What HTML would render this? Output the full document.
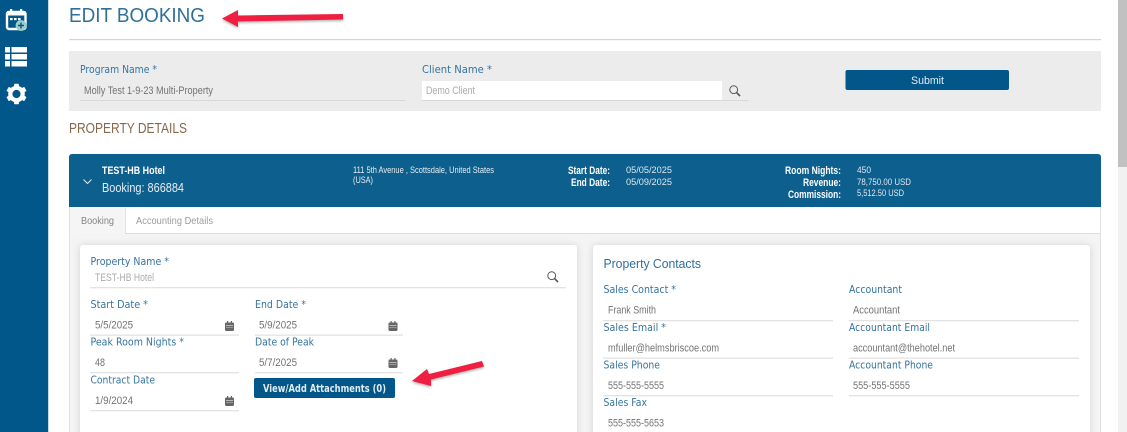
<!DOCTYPE html>
<html lang="en"><head><meta charset="utf-8"><title>Edit Booking</title>
<style>
html,body{margin:0;padding:0;width:1127px;height:432px;overflow:hidden;background:#fff}
svg{display:block;filter:blur(.35px)}
text{font-family:"Liberation Sans",sans-serif;white-space:pre}
.lb{font-family:"DejaVu Sans",sans-serif;font-size:10.8px;fill:#35749f}
.v{font-size:11px;fill:#737373}
.ph{font-size:11px;fill:#ababab}
.w{font-size:9.5px;fill:#dfe8ef}
.wb{font-size:11px;font-weight:bold;fill:#fff}
.u{fill:#e3e3e3}
</style></head><body>
<svg width="1127" height="432" viewBox="0 0 1127 432" xmlns="http://www.w3.org/2000/svg">
<defs>
<filter id="sh" x="-20%" y="-20%" width="140%" height="140%"><feGaussianBlur stdDeviation="4"/></filter>
<filter id="ash" x="-20%" y="-50%" width="140%" height="220%"><feGaussianBlur stdDeviation="1.2"/></filter>
<g id="cal"><rect x="0" y="1.5" width="9" height="8.5" rx="1.2" fill="#666"/><rect x="2" y="0" width="1.2" height="2.5" fill="#666"/><rect x="5.8" y="0" width="1.2" height="2.5" fill="#666"/><rect x="1" y="4.2" width="7" height=".7" fill="#ddd"/><rect x="1" y="6.4" width="7" height=".6" fill="#bbb"/></g>
<g id="srch" fill="none" stroke="#555"><circle cx="4.7" cy="4.7" r="3.9" stroke-width="1"/><path d="M7.6 7.6L11 11" stroke-width="1.6"/></g>
</defs>

<rect width="1127" height="432" fill="#fff"/>

<!-- sidebar -->
<rect x="0" y="0" width="48" height="432" fill="#01568a"/>
<rect x="48" y="0" width="1" height="432" fill="#c9d9e4"/>
<!-- calendar icon -->
<rect x="7" y="12" width="18.500" height="17" rx="2" fill="none" stroke="#fff" stroke-width="2.400"/>
<rect x="7" y="11" width="18.500" height="4.500" fill="#fff"/>
<rect x="10" y="9" width="2.200" height="4" fill="#fff"/><rect x="20" y="9" width="2.200" height="4" fill="#fff"/>
<rect x="10" y="18" width="2.600" height="2.200" fill="#fff"/><rect x="14" y="18" width="2.600" height="2.200" fill="#fff"/><rect x="18" y="18" width="2.600" height="2.200" fill="#fff"/>
<circle cx="21" cy="25.500" r="5.400" fill="#9ccfc6"/>
<path d="M21 22.500v6M18 25.500h6" stroke="#01568a" stroke-width="1.400"/>
<!-- list icon -->
<g fill="#fff"><rect x="5" y="47" width="5" height="5.500"/><rect x="11.500" y="47" width="15.500" height="5.500"/><rect x="5" y="54" width="5" height="5.500"/><rect x="11.500" y="54" width="15.500" height="5.500"/><rect x="5" y="61" width="5" height="5.500"/><rect x="11.500" y="61" width="15.500" height="5.500"/></g>
<!-- gear icon -->
<g transform="translate(16.500 94)" fill="#fff">
<circle r="6.200" fill="none" stroke="#fff" stroke-width="4.200"/>
<rect x="-2.400" y="-10.300" width="4.800" height="5" rx=".7"/>
<rect x="-2.400" y="-10.300" width="4.800" height="5" rx=".7" transform="rotate(60)"/>
<rect x="-2.400" y="-10.300" width="4.800" height="5" rx=".7" transform="rotate(120)"/>
<rect x="-2.400" y="-10.300" width="4.800" height="5" rx=".7" transform="rotate(180)"/>
<rect x="-2.400" y="-10.300" width="4.800" height="5" rx=".7" transform="rotate(240)"/>
<rect x="-2.400" y="-10.300" width="4.800" height="5" rx=".7" transform="rotate(300)"/>
</g>

<!-- scrollbar -->
<rect x="1118" y="0" width="9" height="432" fill="#f1f1f1"/>
<rect x="1118" y="0" width="9" height="167" fill="#c1c1c1"/>

<!-- title -->
<text x="69" y="22" font-size="20" fill="#2f7099" textLength="136" lengthAdjust="spacingAndGlyphs">EDIT BOOKING</text>
<rect x="69" y="39" width="1032" height="1.200" fill="#c5d8e5"/>

<!-- top panel -->
<rect x="69" y="51" width="1032" height="60" fill="#ececec"/>
<text class="lb" x="80" y="73" textLength="77" lengthAdjust="spacingAndGlyphs">Program Name *</text>
<text class="v" x="84" y="94" textLength="129" lengthAdjust="spacingAndGlyphs">Molly Test 1-9-23 Multi-Property</text>
<rect x="80" y="100" width="326" height="1" fill="#d8d8d8"/>
<text class="lb" x="422" y="73" textLength="70" lengthAdjust="spacingAndGlyphs">Client Name *</text>
<rect x="422" y="81" width="300" height="19" fill="#fff"/>
<text class="ph" x="426" y="94" textLength="49" lengthAdjust="spacingAndGlyphs">Demo Client</text>
<rect x="422" y="100" width="326" height="1" fill="#d8d8d8"/>
<use href="#srch" x="729" y="85"/>
<rect x="845.500" y="70" width="163.500" height="20" rx="2" fill="#01568a"/>
<text x="911" y="84" font-size="11" fill="#e4ecf1" textLength="33" lengthAdjust="spacingAndGlyphs">Submit</text>

<text x="69" y="133" font-size="14.500" fill="#84694a" textLength="118" lengthAdjust="spacingAndGlyphs">PROPERTY DETAILS</text>

<!-- accordion -->
<rect x="69" y="154" width="1032" height="278" fill="#f4f4f4"/>
<rect x="69" y="207" width="1032" height="26" fill="#fff"/>
<rect x="69" y="233" width="1032" height="1" fill="#dedede"/>
<rect x="69" y="207" width="1" height="225" fill="#e0e0e0"/>
<rect x="1100" y="207" width="1" height="225" fill="#e0e0e0"/>
<path d="M69 157a3 3 0 0 1 3-3h1026a3 3 0 0 1 3 3v50H69z" fill="#0d5f8e"/>
<path d="M83.500 179.500l4 4 4-4" fill="none" stroke="#dfe9f0" stroke-width="1"/>
<text class="wb" x="102" y="174" textLength="63" lengthAdjust="spacingAndGlyphs">TEST-HB Hotel</text>
<text x="102" y="192" font-size="13" fill="#e6edf2" textLength="82" lengthAdjust="spacingAndGlyphs">Booking: 866884</text>
<text x="353" y="173" font-size="9" fill="#e6edf2" textLength="141" lengthAdjust="spacingAndGlyphs">111 5th Avenue , Scottsdale, United States</text>
<text x="353" y="183" font-size="9" fill="#e6edf2" textLength="20" lengthAdjust="spacingAndGlyphs">(USA)</text>
<text class="wb" x="568" y="174" textLength="42" lengthAdjust="spacingAndGlyphs">Start Date:</text>
<text class="wb" x="571" y="186" textLength="39" lengthAdjust="spacingAndGlyphs">End Date:</text>
<text class="w" x="626" y="173" textLength="46" lengthAdjust="spacingAndGlyphs">05/05/2025</text>
<text class="w" x="626" y="185" textLength="46" lengthAdjust="spacingAndGlyphs">05/09/2025</text>
<text class="wb" x="785" y="174" textLength="56" lengthAdjust="spacingAndGlyphs">Room Nights:</text>
<text class="wb" x="803" y="186" textLength="38" lengthAdjust="spacingAndGlyphs">Revenue:</text>
<text class="wb" x="788" y="198" textLength="53" lengthAdjust="spacingAndGlyphs">Commission:</text>
<text class="w" x="857" y="173" textLength="14" lengthAdjust="spacingAndGlyphs">450</text>
<text class="w" x="857" y="185" textLength="54" lengthAdjust="spacingAndGlyphs">78,750.00 USD</text>
<text class="w" x="857" y="196" textLength="47" lengthAdjust="spacingAndGlyphs">5,512.50 USD</text>

<!-- tabs -->
<rect x="70" y="208" width="55" height="26" fill="#f5f5f5"/>
<rect x="125" y="208" width="1" height="26" fill="#e2e2e2"/>
<text x="81" y="224" font-size="10.500" fill="#858585" textLength="33" lengthAdjust="spacingAndGlyphs">Booking</text>
<text x="136" y="224" font-size="10.500" fill="#9c9c9c" textLength="77" lengthAdjust="spacingAndGlyphs">Accounting Details</text>

<!-- cards -->
<rect x="80" y="245" width="497" height="200" rx="3" fill="#000" opacity=".13" filter="url(#sh)"/>
<rect x="593" y="245" width="497" height="200" rx="3" fill="#000" opacity=".13" filter="url(#sh)"/>
<rect x="80" y="245" width="497" height="200" rx="3" fill="#fff"/>
<rect x="593" y="245" width="497" height="200" rx="3" fill="#fff"/>

<!-- left card -->
<text class="lb" x="90.500" y="265" textLength="78.500" lengthAdjust="spacingAndGlyphs">Property Name *</text>
<text class="ph" x="95" y="281" textLength="59" lengthAdjust="spacingAndGlyphs">TEST-HB Hotel</text>
<use href="#srch" x="547" y="271"/>
<rect class="u" x="90" y="287" width="476" height="1.300"/>

<text class="lb" x="90.500" y="308" textLength="57.500" lengthAdjust="spacingAndGlyphs">Start Date *</text>
<text class="v" x="95" y="328.500" textLength="38" lengthAdjust="spacingAndGlyphs">5/5/2025</text>
<use href="#cal" x="225" y="321"/>
<rect class="u" x="90" y="334.500" width="149" height="1.300"/>
<text class="lb" x="255" y="308" textLength="51" lengthAdjust="spacingAndGlyphs">End Date *</text>
<text class="v" x="259" y="328.500" textLength="38" lengthAdjust="spacingAndGlyphs">5/9/2025</text>
<use href="#cal" x="388.500" y="321"/>
<rect class="u" x="255" y="334.500" width="148" height="1.300"/>

<text class="lb" x="90.500" y="345.500" textLength="93.500" lengthAdjust="spacingAndGlyphs">Peak Room Nights *</text>
<text class="v" x="95" y="366" textLength="10" lengthAdjust="spacingAndGlyphs">48</text>
<rect class="u" x="90" y="372" width="149" height="1.300"/>
<text class="lb" x="255" y="345.500" textLength="59" lengthAdjust="spacingAndGlyphs">Date of Peak</text>
<text class="v" x="259" y="366" textLength="38" lengthAdjust="spacingAndGlyphs">5/7/2025</text>
<use href="#cal" x="388.500" y="358"/>
<rect class="u" x="255" y="372" width="148" height="1.300"/>

<text class="lb" x="90.500" y="383.500" textLength="64.500" lengthAdjust="spacingAndGlyphs">Contract Date</text>
<text class="v" x="95" y="404" textLength="38" lengthAdjust="spacingAndGlyphs">1/9/2024</text>
<use href="#cal" x="225" y="396"/>
<rect class="u" x="90" y="410" width="149" height="1.300"/>

<rect x="254" y="378" width="141" height="20" rx="2" fill="#01568a"/>
<text x="263" y="392" font-size="10.800" font-weight="bold" fill="#e4ecf1" style="font-family:'DejaVu Sans',sans-serif" textLength="123" lengthAdjust="spacingAndGlyphs">View/Add Attachments (0)</text>

<!-- right card -->
<text x="603.500" y="268" font-size="13" fill="#2f6f9b" textLength="97.500" lengthAdjust="spacingAndGlyphs">Property Contacts</text>
<text class="lb" x="603.500" y="293" textLength="72.500" lengthAdjust="spacingAndGlyphs">Sales Contact *</text>
<text class="v" x="608" y="313.500" textLength="48" lengthAdjust="spacingAndGlyphs">Frank Smith</text>
<rect class="u" x="603" y="320" width="230" height="1.300"/>
<text class="lb" x="603.500" y="331" textLength="62.500" lengthAdjust="spacingAndGlyphs">Sales Email *</text>
<text class="v" x="608" y="351.500" textLength="111" lengthAdjust="spacingAndGlyphs">mfuller@helmsbriscoe.com</text>
<rect class="u" x="603" y="357.500" width="230" height="1.300"/>
<text class="lb" x="603.500" y="368.500" textLength="56.500" lengthAdjust="spacingAndGlyphs">Sales Phone</text>
<text class="v" x="608" y="389" textLength="56" lengthAdjust="spacingAndGlyphs">555-555-5555</text>
<rect class="u" x="603" y="395" width="230" height="1.300"/>
<text class="lb" x="603.500" y="406" textLength="43.500" lengthAdjust="spacingAndGlyphs">Sales Fax</text>
<text class="v" x="608" y="426.500" textLength="56" lengthAdjust="spacingAndGlyphs">555-555-5653</text>

<text class="lb" x="849" y="293" textLength="53" lengthAdjust="spacingAndGlyphs">Accountant</text>
<text class="v" x="853" y="313.500" textLength="47" lengthAdjust="spacingAndGlyphs">Accountant</text>
<rect class="u" x="849" y="320" width="230" height="1.300"/>
<text class="lb" x="849" y="331" textLength="81" lengthAdjust="spacingAndGlyphs">Accountant Email</text>
<text class="v" x="853" y="351.500" textLength="102" lengthAdjust="spacingAndGlyphs">accountant@thehotel.net</text>
<rect class="u" x="849" y="357.500" width="230" height="1.300"/>
<text class="lb" x="849" y="368.500" textLength="84" lengthAdjust="spacingAndGlyphs">Accountant Phone</text>
<text class="v" x="853" y="389" textLength="57" lengthAdjust="spacingAndGlyphs">555-555-5555</text>
<rect class="u" x="849" y="395" width="230" height="1.300"/>

<!-- arrows -->
<path d="M222 18.500L238 10V15.500L343 14V19.500L238 21.500V27Z" fill="#000" opacity=".3" filter="url(#ash)" transform="translate(0 1.500)"/>
<path d="M222 18.500L238 10V15.500L343 14V19.500L238 21.500V27Z" fill="#ee1f41"/>
<path d="M412 381L427 369L429 374L482 361L484 366.500L431 379.500L431 386Z" fill="#000" opacity=".3" filter="url(#ash)" transform="translate(0 1.500)"/>
<path d="M412 381L427 369L429 374L482 361L484 366.500L431 379.500L431 386Z" fill="#ee1f41"/>
</svg>
</body></html>
